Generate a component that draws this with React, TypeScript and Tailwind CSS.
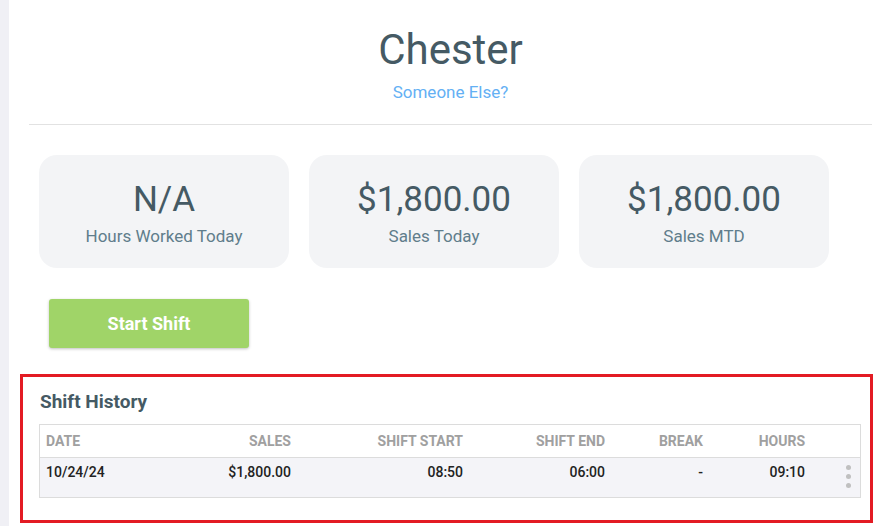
import React from "react";

const cols = "grid grid-cols-[129px_129px_172px_142px_98px_102px_1fr]";

function Stat({ value, label }: { value: string; label: string }) {
  return (
    <div className="w-[250px] h-[113px] rounded-[18px] bg-[#f3f4f6] flex flex-col items-center pt-[25px]">
      <div className="text-[35px] leading-[40px] text-[#455a64]">{value}</div>
      <div className="mt-[4px] text-[17px] leading-[24px] text-[#607d8b]">{label}</div>
    </div>
  );
}

export default function App() {
  return (
    <div
      className="flex w-full min-h-screen bg-white"
      style={{ fontFamily: "Roboto, 'Liberation Sans', sans-serif" }}
    >
      <div className="w-[9px] shrink-0 bg-[#f0f0f5] min-h-[526px]" />
      <div className="flex-1 pl-[11px] pr-[15px]">
        <div className="ml-[9px] mr-[1px] pt-[25px] flex flex-col items-center border-b border-[#e2e2e2] pb-[20px]">
          <div className="text-[42px] leading-[50px] text-[#455a64]">Chester</div>
          <div className="mt-[5px] text-[17px] leading-[24px] text-[#64b0f4]">Someone Else?</div>
        </div>

        <div className="ml-[19px] mt-[30px] flex gap-[20px]">
          <Stat value="N/A" label="Hours Worked Today" />
          <Stat value="$1,800.00" label="Sales Today" />
          <Stat value="$1,800.00" label="Sales MTD" />
        </div>

        <div className="ml-[29px] mt-[31px]">
          <button className="w-[200px] h-[49px] rounded-[3px] bg-[#a0d468] text-white font-bold text-[18px] shadow-[0_1px_3px_rgba(0,0,0,0.25)]">
            Start Shift
          </button>
        </div>

        <div className="mt-[26px] border-[3px] border-[#e31b23] pt-[13px] pb-[22px] pl-[16px] pr-[9px]">
          <div className="pl-[1px] text-[19px] leading-[24px] font-bold text-[#455a64]">Shift History</div>
          <div className="mt-[10px] border border-[#dcdcdc]">
            <div className={`${cols} bg-white border-b border-[#dcdcdc] text-[14px] leading-[20px] font-bold text-[#a0a0a0] pt-[6px] pb-[6px]`}>
              <div className="pl-[6px]">DATE</div>
              <div className="text-right pr-[7px]">SALES</div>
              <div className="text-right pr-[7px]">SHIFT START</div>
              <div className="text-right pr-[7px]">SHIFT END</div>
              <div className="text-right pr-[7px]">BREAK</div>
              <div className="text-right pr-[7px]">HOURS</div>
              <div />
            </div>
            <div className={`${cols} bg-[#f4f4f8] h-[39px] text-[14px] leading-[20px] font-medium text-[#222]`}>
              <div className="pl-[6px] pt-[4px]">10/24/24</div>
              <div className="text-right pr-[7px] pt-[4px]">$1,800.00</div>
              <div className="text-right pr-[7px] pt-[4px]">08:50</div>
              <div className="text-right pr-[7px] pt-[4px]">06:00</div>
              <div className="text-right pr-[7px] pt-[4px]">-</div>
              <div className="text-right pr-[7px] pt-[4px]">09:10</div>
              <div className="flex justify-end pr-[9px] pt-[7px]">
                <div className="flex flex-col gap-[4px]">
                  <span className="block w-[5px] h-[5px] rounded-full bg-[#c0c0c0]" />
                  <span className="block w-[5px] h-[5px] rounded-full bg-[#c0c0c0]" />
                  <span className="block w-[5px] h-[5px] rounded-full bg-[#c0c0c0]" />
                </div>
              </div>
            </div>
          </div>
        </div>
      </div>
    </div>
  );
}
